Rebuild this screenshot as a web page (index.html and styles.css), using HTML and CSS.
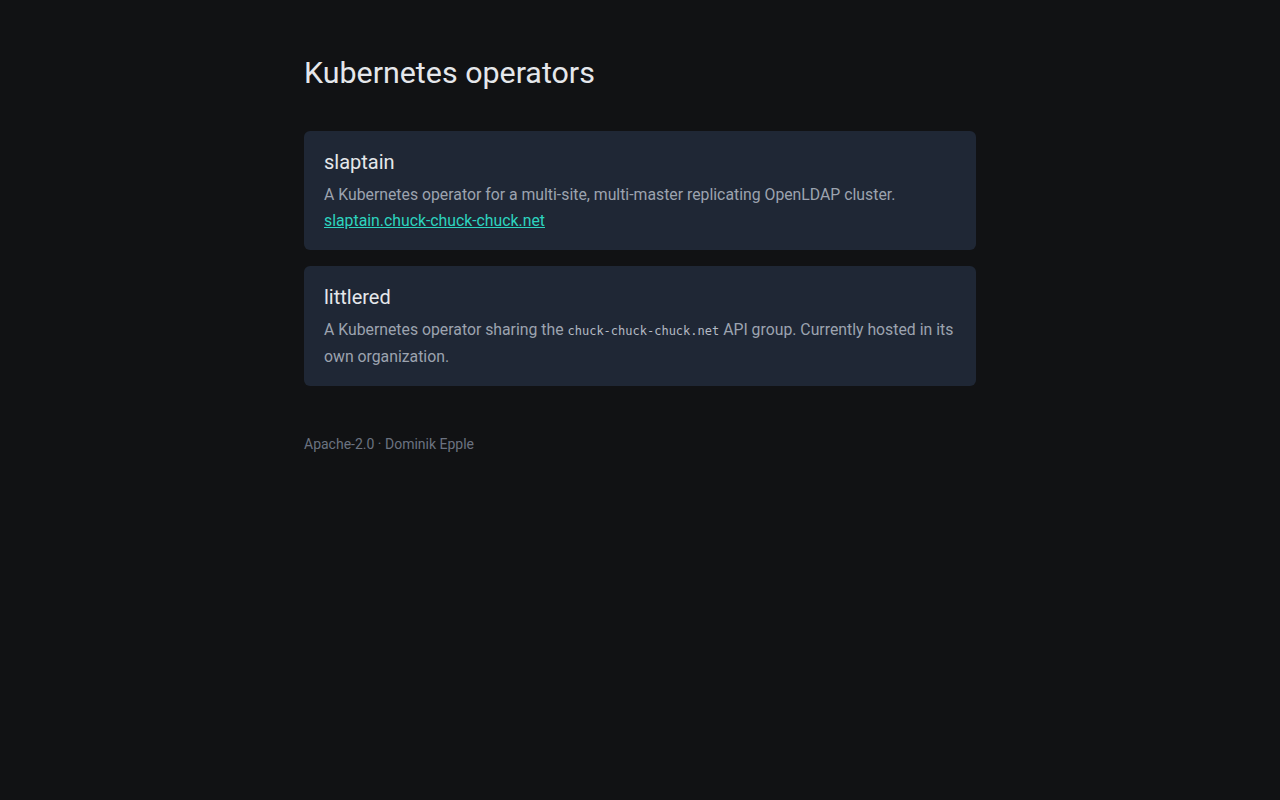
FILE: index.html
```html
<!DOCTYPE html>
<html lang="en">
<head>
<meta charset="utf-8">
<title>Kubernetes operators</title>
<link rel="stylesheet" href="styles.css">
</head>
<body>
<main class="page">
  <h1 class="title">Kubernetes operators</h1>
  <section class="list">
    <article class="card">
      <h2 class="card-title">slaptain</h2>
      <p class="card-text">A Kubernetes operator for a multi-site, multi-master replicating OpenLDAP cluster.<br><a class="card-link" href="#">slaptain.chuck-chuck-chuck.net</a></p>
    </article>
    <article class="card">
      <h2 class="card-title">littlered</h2>
      <p class="card-text">A Kubernetes operator sharing the <code class="code">chuck-chuck-chuck.net</code> API group. Currently hosted in its own organization.</p>
    </article>
  </section>
  <footer class="footer">Apache-2.0 · Dominik Epple</footer>
</main>
</body>
</html>
```
FILE: styles.css
```css
html, body {
  margin: 0;
  padding: 0;
  background: #111214;
}
body {
  font-family: Roboto, "Liberation Sans", sans-serif;
  color: #e5e7eb;
}
.page {
  width: 672px;
  margin: 0 auto;
  padding-top: 53px;
}
.title {
  margin: 0 0 38px;
  font-size: 30.4px;
  line-height: 40px;
  font-weight: 400;
  color: #e5e7eb;
}
.list {
  display: flex;
  flex-direction: column;
  gap: 16px;
}
.card {
  background: #1f2735;
  border-radius: 6px;
  padding: 18px 20px 16px;
}
.card-title {
  margin: 0;
  font-size: 20px;
  line-height: 26px;
  font-weight: 400;
  color: #e5e7eb;
}
.card-text {
  margin: 7px 0 0;
  font-size: 15.8px;
  line-height: 26px;
  color: #9ca3af;
}
.card-link {
  color: #2dd4bf;
  text-decoration: underline;
}
.code {
  font-family: "DejaVu Sans Mono", monospace;
  font-size: 12px;
  color: #b4bac4;
}
.footer {
  margin-top: 50px;
  font-size: 14px;
  line-height: 16px;
  color: #6b7280;
}
```
